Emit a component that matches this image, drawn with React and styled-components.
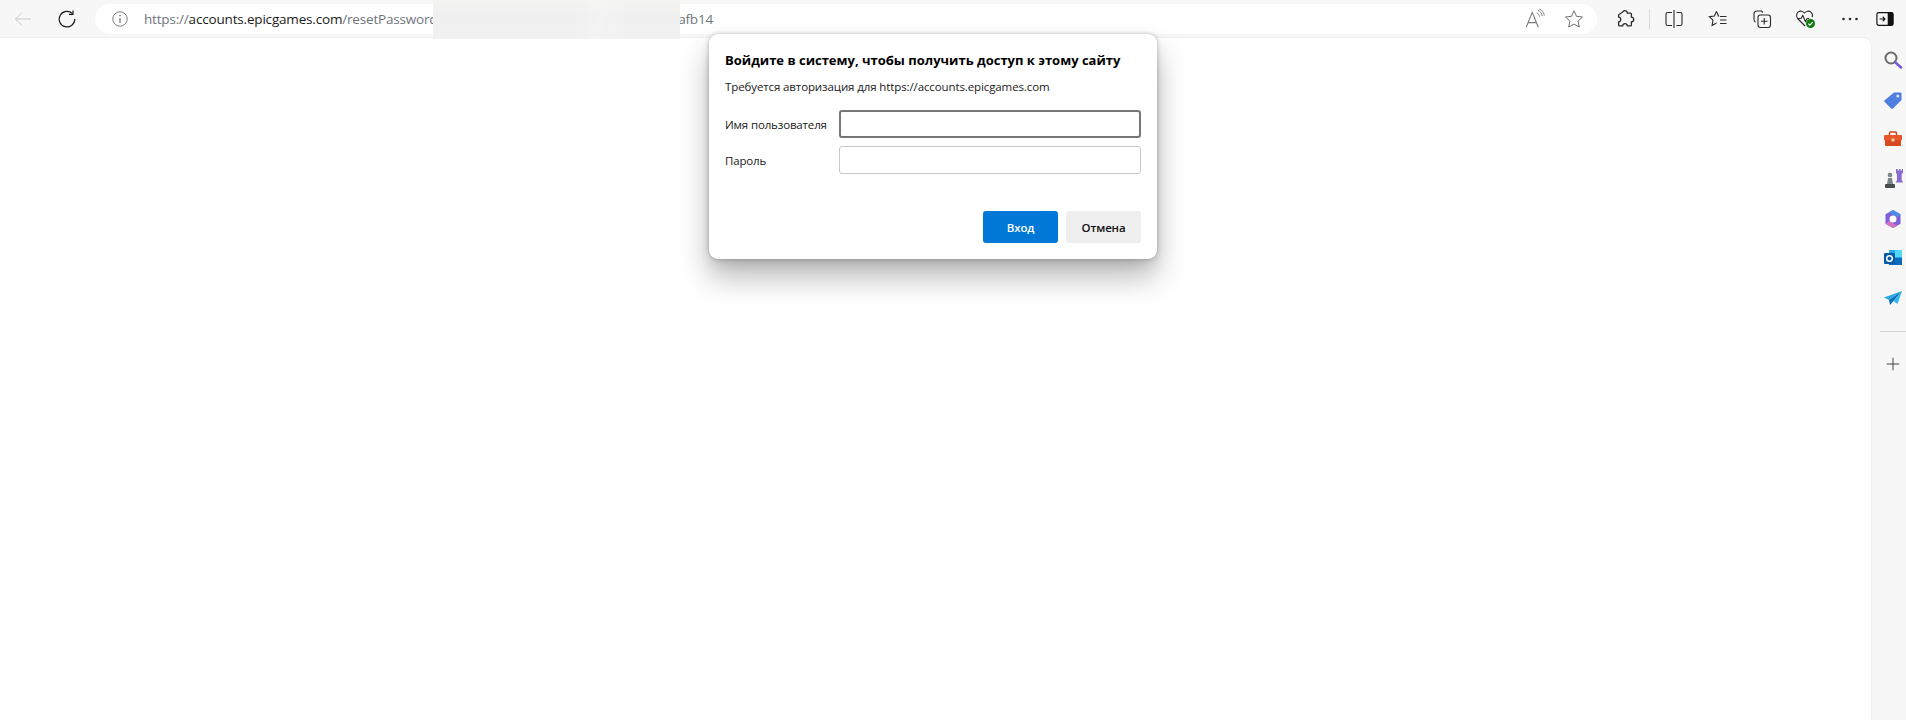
import styled, { createGlobalStyle } from "styled-components";

const GlobalStyle = createGlobalStyle`
  html, body {
    margin: 0;
    height: 100%;
    background: #f7f7f7;
    font-family: "Open Sans", "Noto Sans", sans-serif;
    overflow: hidden;
  }
`;

const Page = styled.div`
  position: relative;
  width: 1906px;
  height: 720px;
  display: flex;
  flex-direction: column;
  background: #f7f7f7;
  overflow: hidden;
`;

const Toolbar = styled.header`
  height: 38px;
  flex: none;
  display: flex;
  align-items: center;
  padding-left: 1px;
`;

const ToolButton = styled.div`
  width: ${(p) => p.$w || 44}px;
  height: 30px;
  flex: none;
  display: flex;
  align-items: center;
  justify-content: center;
  margin-left: ${(p) => p.$ml || 0}px;
`;

const AddressBar = styled.div`
  width: 1502px;
  height: 30px;
  margin-left: 6px;
  flex: none;
  display: flex;
  align-items: center;
  padding-left: 16px;
  background: #fff;
  border-radius: 15px;
  box-sizing: border-box;
`;

const Url = styled.div`
  width: 569px;
  margin-left: 15px;
  display: flex;
  justify-content: space-between;
  font-size: 13.5px;
  letter-spacing: -0.18px;
  color: #70757a;
  white-space: nowrap;
`;

const Host = styled.span`
  color: #1b1b1b;
`;

const AddressEnd = styled.div`
  margin-left: auto;
  margin-right: 4px;
  display: flex;
  align-items: center;
`;

const Separator = styled.div`
  width: 1px;
  height: 20px;
  flex: none;
  background: #d8d8d8;
  margin: 0 2px;
`;

const Body = styled.div`
  flex: 1;
  display: flex;
  min-height: 0;
`;

const Content = styled.main`
  flex: 1;
  background: #fff;
  border-top-right-radius: 8px;
  box-shadow: 0 0 2px rgba(0, 0, 0, 0.1);
`;

const Sidebar = styled.aside`
  width: 35px;
  flex: none;
  padding-top: 2px;
`;

const SideIcon = styled.div`
  width: 44px;
  height: 39.7px;
  display: flex;
  align-items: center;
  justify-content: center;
`;

const SideRule = styled.div`
  width: 26px;
  height: 1px;
  background: #d4d4d4;
  margin: 13px 0 0 9px;
`;

const SidePlus = styled.div`
  margin-top: 25px;
  width: 44px;
  display: flex;
  justify-content: center;
`;

/* the censored piece of the url, laid over the toolbar */
const BlurPatch = styled.div`
  position: absolute;
  left: 433px;
  top: 0;
  width: 247px;
  height: 39px;
  background:
    linear-gradient(90deg, rgba(255, 255, 255, 0) 55%, rgba(255, 255, 255, 0.2) 68%, rgba(255, 255, 255, 0) 80%),
    linear-gradient(180deg, #f3f3f2 0%, #eff0ef 40%, #f0f1f0 100%);
`;

const Dialog = styled.section`
  position: absolute;
  left: 709px;
  top: 34px;
  width: 448px;
  height: 225px;
  box-sizing: border-box;
  padding: 17px 16px 0 16px;
  background: #fff;
  border-radius: 9px;
  box-shadow: 0 0 4px rgba(0, 0, 0, 0.25), 0 18px 30px rgba(0, 0, 0, 0.28), 0 6px 12px rgba(0, 0, 0, 0.08);
`;

const Title = styled.h1`
  margin: 0;
  font-size: 13px;
  line-height: 18px;
  font-weight: 700;
  color: #000;
  white-space: nowrap;
`;

const Subtitle = styled.p`
  margin: 10px 0 0;
  font-size: 11.5px;
  line-height: 16px;
  letter-spacing: -0.11px;
  color: #1a1a1a;
`;

const Form = styled.div`
  margin-top: 15px;
  display: grid;
  grid-template-columns: 114px 1fr;
  row-gap: 8px;
  align-items: center;
`;

const Label = styled.label`
  font-size: 11.5px;
  letter-spacing: -0.15px;
  color: #1a1a1a;
`;

const Input = styled.div`
  height: 28px;
  box-sizing: border-box;
  border-radius: 3px;
  background: #fff;
  border: ${(p) => (p.$focused ? "2px solid #767676" : "1px solid #c8c8c8")};
`;

const Actions = styled.div`
  margin-top: 37px;
  display: flex;
  justify-content: flex-end;
  gap: 8px;
`;

const Button = styled.button`
  width: 75px;
  height: 32px;
  border: none;
  border-radius: 3px;
  padding: 0;
  font-family: inherit;
  font-size: 11.5px;
  font-weight: 600;
  letter-spacing: -0.15px;
  color: ${(p) => (p.$primary ? "#fff" : "#111")};
  background: ${(p) => (p.$primary ? "#0078d7" : "#efefef")};
`;

const Svg = ({ size = 20, children, ...rest }) => (
  <svg width={size} height={size} viewBox="0 0 20 20" fill="none" stroke="currentColor" strokeWidth="1" {...rest}>
    {children}
  </svg>
);

const IconWrap = styled.span`
  display: flex;
  color: ${(p) => p.$color || "#2b2b2b"};
`;

const BackIcon = () => (
  <IconWrap $color="#c9c9c9">
    <Svg>
      <path d="M18 10H2.5M9 3.5 2.5 10 9 16.500" />
    </Svg>
  </IconWrap>
);

const ReloadIcon = () => (
  <IconWrap $color="#1c1c1c">
    <Svg>
      <path d="M15.500 4.600A7.800 7.800 0 1 0 17.800 10" strokeWidth="1.200" />
      <path d="M16 1.500v3.800h-4" strokeWidth="1.200" />
    </Svg>
  </IconWrap>
);

const InfoIcon = () => (
  <IconWrap $color="#6e6e6e">
    <Svg size={18}>
      <circle cx="10" cy="10" r="8" />
      <path d="M10 9v5.500" strokeWidth="1.300" />
      <circle cx="10" cy="6.300" r=".9" fill="currentColor" stroke="none" />
    </Svg>
  </IconWrap>
);

const ReadAloudIcon = () => (
  <IconWrap $color="#7a7a7a">
    <Svg size={22}>
      <path d="M2 17.500 7.500 4 13 17.500M3.800 13.300h7.400" />
      <path d="M11.500 4.500c1.500.6 2.400 1.800 2.700 3.300M12.500 2c2.300.8 3.800 2.900 4.200 5.300M14 .8c2.500 1 4 3.400 4.500 6" strokeWidth=".9" />
    </Svg>
  </IconWrap>
);

const StarIcon = () => (
  <IconWrap $color="#6e6e6e">
    <Svg size={20}>
      <path d="M10 1.800 12.500 7.300l6 .7-4.400 4.100 1.200 5.900L10 15.100 4.700 18l1.200-5.900L1.500 8l6-.7z" />
    </Svg>
  </IconWrap>
);

const ExtensionIcon = () => (
  <IconWrap>
    <Svg>
      <path
        d="M7.500 3.200C8 1.800 9.500 1.300 10.800 1.800c1.100.4 1.700 1.400 1.600 2.300h3c.6 0 1 .4 1 1v3c1.400.2 2.300 1.200 2.300 2.400s-1 2.300-2.300 2.400v3c0 .6-.4 1-1 1h-3c-.2-1.400-1.200-2.200-2.400-2.200s-2.200.8-2.400 2.200h-3c-.6 0-1-.4-1-1v-3c1.300-.2 2.200-1.200 2.200-2.400S4.800 8.300 3.600 8.100V6.500c0-.6.400-1.100 1-1.300z"
        strokeWidth="1.300"
      />
    </Svg>
  </IconWrap>
);

const SplitIcon = () => (
  <IconWrap>
    <Svg>
      <path d="M8 3.500H3.500a1.500 1.500 0 0 0-1.500 1.500v10a1.500 1.500 0 0 0 1.500 1.500H8M12.500 3.500h4a1.500 1.500 0 0 1 1.500 1.500v10a1.500 1.500 0 0 1-1.500 1.500h-4M10 1v18" strokeWidth="1.100" />
    </Svg>
  </IconWrap>
);

const FavoritesIcon = () => (
  <IconWrap>
    <Svg>
      <path d="M8.500 2.500 10.600 7h-1M8.500 2.500 6.400 7l-5 .7 3.600 3.500-.9 5.300 4.400-2.400M12 7.500h6.500M12 11h6.500M12 14.500h6.500" strokeWidth="1.100" />
    </Svg>
  </IconWrap>
);

const CollectionsIcon = () => (
  <IconWrap>
    <Svg>
      <path d="M11 3.500 9.500 2H5A3 3 0 0 0 2 5v5.500c0 1.200.8 2.200 1.500 2.700" strokeWidth="1.100" />
      <rect x="6" y="6" width="12.500" height="12.500" rx="2.500" strokeWidth="1.100" />
      <path d="M12.200 9v6.500M9 12.200h6.500" strokeWidth="1.100" />
    </Svg>
  </IconWrap>
);

const HeartIcon = () => (
  <IconWrap>
    <svg width="22" height="22" viewBox="0 0 22 22" fill="none" stroke="currentColor" strokeWidth="1.100">
      <path d="M10 18 3 11C1 8.800 1.200 5.800 3 4.200c2-1.700 4.800-1.300 6.500.8 1.700-2.100 4.600-2.500 6.500-.8 1.400 1.300 1.800 3.200 1.200 5" />
      <path d="M2 10.500h4l1.800-3 2.600 6 1.800-3h2" />
      <circle cx="15.500" cy="15.500" r="4.500" fill="#107c10" stroke="none" />
      <path d="m13.300 15.600 1.600 1.500 2.800-3" stroke="#fff" strokeWidth="1.100" />
    </svg>
  </IconWrap>
);

const MoreIcon = () => (
  <IconWrap>
    <Svg>
      <circle cx="3.500" cy="10" r="1.300" fill="currentColor" stroke="none" />
      <circle cx="10" cy="10" r="1.300" fill="currentColor" stroke="none" />
      <circle cx="16.500" cy="10" r="1.300" fill="currentColor" stroke="none" />
    </Svg>
  </IconWrap>
);

const PanelIcon = () => (
  <IconWrap $color="#111">
    <Svg size={18}>
      <rect x="1" y="3" width="18" height="14" rx="2" strokeWidth="1.300" />
      <rect x="13" y="3" width="6" height="14" fill="currentColor" stroke="none" />
      <path d="M4 10h6M7.500 7.500 10 10l-2.500 2.500" strokeWidth="1.200" />
    </Svg>
  </IconWrap>
);

const SearchSide = () => (
  <svg width="20" height="20" viewBox="0 0 20 20" fill="none">
    <circle cx="8" cy="8" r="5.500" stroke="#6b6b6b" strokeWidth="2" />
    <path d="m12.500 12.500 5.500 5" stroke="#7a5bd6" strokeWidth="2.600" strokeLinecap="round" />
  </svg>
);

const TagSide = () => (
  <svg width="20" height="20" viewBox="0 0 20 20">
    <path d="M11 2.500h6.500a1 1 0 0 1 1 1V10l-8.500 8.500a1.300 1.300 0 0 1-1.800 0L1.700 12a1.300 1.300 0 0 1 0-1.800z" fill="#4f7fe0" />
    <circle cx="14.800" cy="6" r="1.500" fill="#dfe8fb" />
  </svg>
);

const ToolboxSide = () => (
  <svg width="20" height="20" viewBox="0 0 20 20">
    <path d="M6.500 6V4a1 1 0 0 1 1-1h5a1 1 0 0 1 1 1v2" fill="none" stroke="#c8481f" strokeWidth="1.500" />
    <rect x="1" y="6" width="18" height="5.500" rx="1" fill="#e8562a" />
    <rect x="2" y="11" width="16" height="6" rx="1" fill="#d8491e" />
    <rect x="8.500" y="9.500" width="3" height="3" fill="#f2c9a8" />
  </svg>
);

const ChessSide = () => (
  <svg width="22" height="22" viewBox="0 0 22 22">
    <path d="M14 1h1.700v1.500h1.300V1h1.500v1.500H20V1h1v4l-1.300 1v6l1.500 2.500H13.500L15 12V6l-1-1z" fill="#8a6cd0" />
    <circle cx="8" cy="7" r="2.300" fill="#7d8587" />
    <path d="M6 10h4l1 6H5z" fill="#7d8587" />
    <rect x="3" y="16" width="10" height="4" rx="1" fill="#474d4e" />
  </svg>
);

const CopilotSide = () => (
  <svg width="20" height="20" viewBox="0 0 20 20">
    <path d="M10 1 17.500 5.300v9.400L10 19 2.500 14.700V5.300z" fill="#7d5fd8" />
    <path d="M10 1 17.500 5.300 14 8 6 3.300z" fill="#4a8fe6" />
    <path d="M2.500 14.700 6 12l8 4.700L10 19z" fill="#d76fc4" />
    <circle cx="10" cy="10" r="3.500" fill="#fff" />
  </svg>
);

const OutlookSide = () => (
  <svg width="20" height="20" viewBox="0 0 20 20">
    <rect x="6" y="2" width="13" height="15" rx="1" fill="#28a8ea" />
    <rect x="12" y="2" width="7" height="7" fill="#50d9ff" />
    <path d="M6 10h13v7H6z" fill="#0f6cbd" />
    <rect x="1" y="5" width="11" height="11" rx="1" fill="#0a5aa8" />
    <circle cx="6.500" cy="10.500" r="2.800" fill="none" stroke="#fff" strokeWidth="1.500" />
  </svg>
);

const SendSide = () => (
  <svg width="20" height="20" viewBox="0 0 20 20">
    <path d="M19 3 1 9.500l5 2.500z" fill="#29a9e8" />
    <path d="M19 3 6 12l1 5 3.500-4z" fill="#0b6fb8" />
    <path d="M19 3 10.500 13l4 3z" fill="#2fb8f0" />
  </svg>
);

const PlusIcon = () => (
  <IconWrap $color="#333">
    <Svg size={14}>
      <path d="M10 1v18M1 10h18" strokeWidth="1.300" />
    </Svg>
  </IconWrap>
);

const sideIcons = [SearchSide, TagSide, ToolboxSide, ChessSide, CopilotSide, OutlookSide, SendSide];

export default function App() {
  return (
    <Page>
      <GlobalStyle />
      <Toolbar>
        <ToolButton><BackIcon /></ToolButton>
        <ToolButton><ReloadIcon /></ToolButton>
        <AddressBar>
          <InfoIcon />
          <Url>
            <span>https://<Host>accounts.epicgames.com</Host>/resetPassword</span>
            <span>afb14</span>
          </Url>
          <AddressEnd>
            <ToolButton $w={40}><ReadAloudIcon /></ToolButton>
            <ToolButton $w={38}><StarIcon /></ToolButton>
          </AddressEnd>
        </AddressBar>
        <ToolButton $ml={6}><ExtensionIcon /></ToolButton>
        <Separator />
        <ToolButton><SplitIcon /></ToolButton>
        <ToolButton><FavoritesIcon /></ToolButton>
        <ToolButton><CollectionsIcon /></ToolButton>
        <ToolButton><HeartIcon /></ToolButton>
        <ToolButton><MoreIcon /></ToolButton>
        <ToolButton $w={26}><PanelIcon /></ToolButton>
      </Toolbar>
      <Body>
        <Content />
        <Sidebar>
          {sideIcons.map((Icon, i) => (
            <SideIcon key={i}><Icon /></SideIcon>
          ))}
          <SideRule />
          <SidePlus><PlusIcon /></SidePlus>
        </Sidebar>
      </Body>
      <BlurPatch />
      <Dialog>
        <Title>Войдите в систему, чтобы получить доступ к этому сайту</Title>
        <Subtitle>Требуется авторизация для https://accounts.epicgames.com</Subtitle>
        <Form>
          <Label>Имя пользователя</Label>
          <Input $focused />
          <Label>Пароль</Label>
          <Input />
        </Form>
        <Actions>
          <Button $primary>Вход</Button>
          <Button>Отмена</Button>
        </Actions>
      </Dialog>
    </Page>
  );
}
